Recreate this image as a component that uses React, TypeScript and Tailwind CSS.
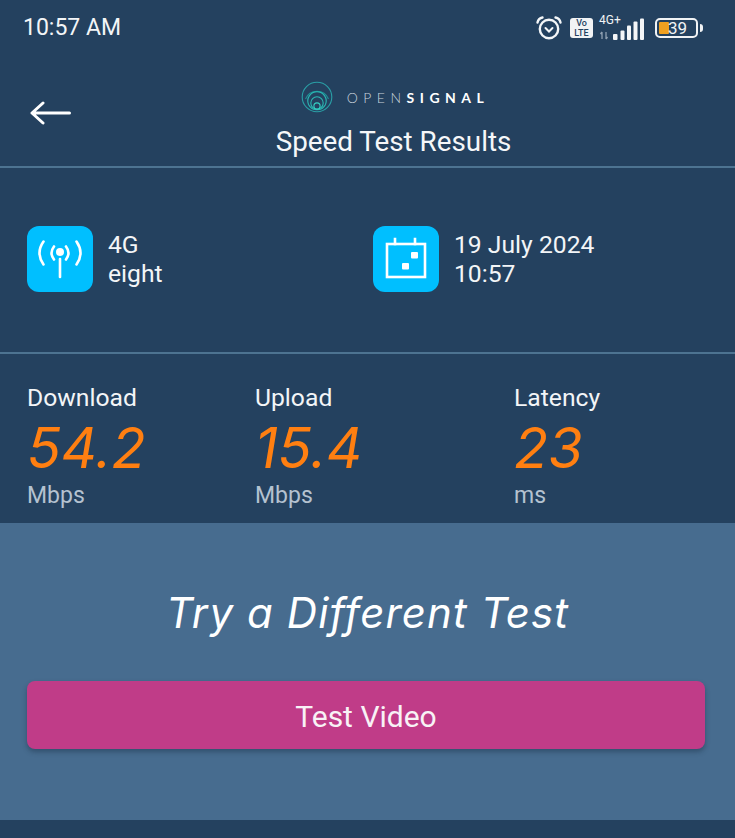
const roboto = { fontFamily: 'Roboto, sans-serif' };

function AlarmIcon() {
  return (
    <svg width="28" height="28" viewBox="0 0 28 28" fill="none" stroke="#f4f6f8" strokeWidth="2.4" strokeLinecap="round">
      <circle cx="14" cy="15" r="9.2" />
      <path d="M10.5 14l3.5 3.5 3.5-3.5" strokeWidth="2" />
      <path d="M2.5 8.5C3 6 5 4 7.5 3.5M25.5 8.5C25 6 23 4 20.5 3.5" />
    </svg>
  );
}

function SignalBars() {
  return (
    <svg width="46" height="23" viewBox="0 0 46 23" fill="#f4f6f8">
      <rect x="14" y="16" width="4.5" height="6" rx="1" />
      <rect x="21.5" y="12.5" width="4" height="9.5" rx="1" />
      <rect x="28" y="7.5" width="4" height="14.5" rx="1" />
      <rect x="34.5" y="3.5" width="4" height="18.5" rx="1" />
      <rect x="41" y="0.5" width="4" height="21.5" rx="1" />
      <path d="M3 14v7M1.5 16l1.5-2M7 14v7M8.5 19l-1.5 2" stroke="#8fa0b2" strokeWidth="1.3" fill="none" />
    </svg>
  );
}

function Battery() {
  return (
    <div className="flex items-center gap-[2px]">
      <div className="relative flex h-[20px] w-[43px] items-center rounded-[5px] border-2 border-[#f1f3f5] p-[2px]">
        <div className="h-full w-[10px] rounded-[1px] bg-[#efa020]" />
        <span className="absolute left-[11px] top-[-2px] text-[17px] leading-[20px] text-[#f1f3f5]" style={roboto}>39</span>
      </div>
      <div className="h-[8px] w-[3px] rounded-r-sm bg-[#f1f3f5]" />
    </div>
  );
}

function StatusBar() {
  return (
    <div className="flex h-[56px] items-center justify-between pl-[23px] pr-[32px] text-white">
      <span className="pt-[1px] text-[23px] font-normal text-[#f3f5f7]" style={roboto}>10:57 AM</span>
      <div className="flex items-center">
        <AlarmIcon />
        <div className="ml-[7px] flex h-[20px] w-[23px] flex-col items-center justify-center rounded-[3px] bg-[#f1f3f5] text-[9px] font-medium leading-[10px] text-[#24415f]" style={roboto}>
          <span>Vo</span>
          <span>LTE</span>
        </div>
        <div className="relative ml-[6px] h-[26px] w-[46px]">
          <span className="absolute left-0 top-[-2px] text-[12px] leading-[14px] text-[#f1f3f5]" style={roboto}>4G+</span>
          <div className="absolute bottom-0 left-0"><SignalBars /></div>
        </div>
        <div className="ml-[10px]"><Battery /></div>
      </div>
    </div>
  );
}

function Logo() {
  return (
    <div className="flex items-center">
      <svg width="32" height="32" viewBox="0 0 32 32" fill="none" stroke="#2bb7b3" strokeWidth="1.1">
        <circle cx="16" cy="16" r="14.8" stroke="#2a9fa6" />
        <path d="M4.5 21a12.5 12.5 0 0 1 23 0" transform="translate(0 -3)" stroke="#1f8f96" />
        <path d="M7.5 23.5a9.2 9.2 0 1 1 17 0 9.5 9.5 0 0 1-17 0z" />
        <circle cx="16" cy="22" r="6.2" />
        <circle cx="16" cy="25" r="3.1" stroke="#35d0c4" />
      </svg>
      <span className="ml-[14px] text-[14px] tracking-[5.5px] text-[#c9d3dc]" style={{ fontFamily: 'Lato, sans-serif' }}>
        <span className="font-light">OPEN</span>
        <span className="font-bold text-white">SIGNAL</span>
      </span>
    </div>
  );
}

function Header() {
  return (
    <div className="flex h-[112px] border-b-2 border-[#4d7391]">
      <div className="flex w-[30px] shrink-0" />
      <svg className="mt-[44px] shrink-0" width="41" height="26" viewBox="0 0 41 26" fill="none" stroke="#fff" strokeWidth="3" strokeLinecap="round" strokeLinejoin="round">
        <path d="M39.5 13H2M13 3L2 13l11 10" />
      </svg>
      <div className="ml-[30px] flex w-[585px] flex-col items-center pt-[25px]">
        <div className="pl-[3px]"><Logo /></div>
        <h1 className="mt-[11px] text-[27.8px] leading-[36px] text-[#f5f7f9]" style={roboto}>Speed Test Results</h1>
      </div>
    </div>
  );
}

function IconTile({ children }: { children: React.ReactNode }) {
  return (
    <div className="flex h-[66px] w-[66px] shrink-0 items-center justify-center rounded-[12px] bg-[#00bfff]">
      {children}
    </div>
  );
}

function Info() {
  return (
    <div className="flex h-[186px] items-center border-b-2 border-[#4d7391] pb-[3px] pl-[27px] text-[24.7px] leading-[29px] text-[#f3f5f7]" style={roboto}>
      <div className="flex w-[346px] items-center gap-[15px]">
        <IconTile>
          <svg width="44" height="44" viewBox="0 0 44 44" fill="none" stroke="#fff" strokeWidth="2.6" strokeLinecap="round">
            <circle cx="22" cy="15" r="4" fill="#fff" stroke="none" />
            <path d="M22 22v18" />
            <path d="M16 9.5Q11 16 16 22.5M28 9.5Q33 16 28 22.5" />
            <path d="M5.5 4.5Q-2.5 16 5.5 27.5M38.5 4.5Q46.5 16 38.5 27.5" />
          </svg>
        </IconTile>
        <div>
          <div>4G</div>
          <div>eight</div>
        </div>
      </div>
      <div className="flex items-center gap-[15px]">
        <IconTile>
          <svg width="44" height="44" viewBox="0 0 44 44" fill="none" stroke="#fff" strokeWidth="2.6" strokeLinecap="square">
            <rect x="3" y="7" width="38" height="33" />
            <path d="M11 2v5M31 2v5" />
            <rect x="27" y="15" width="7" height="6.5" rx="1" fill="#fff" stroke="none" />
            <rect x="18" y="26" width="7" height="6.5" rx="1" fill="#fff" stroke="none" />
          </svg>
        </IconTile>
        <div>
          <div>19 July 2024</div>
          <div>10:57</div>
        </div>
      </div>
    </div>
  );
}

const STATS = [
  { label: 'Download', value: '54.2', unit: 'Mbps', width: 'w-[228px]' },
  { label: 'Upload', value: '15.4', unit: 'Mbps', width: 'w-[259px]' },
  { label: 'Latency', value: '23', unit: 'ms', width: 'w-[200px]' },
];

function Stats() {
  return (
    <div className="flex h-[169px] pl-[27px] pt-[28px]">
      {STATS.map((s) => (
        <div key={s.label} className={s.width}>
          <div className="text-[24.7px] leading-[32px] text-[#f3f5f7]" style={roboto}>{s.label}</div>
          <div className="mt-[5px] text-[56px] italic leading-[58px] text-[#ff7f11]" style={{ fontFamily: 'Inter, sans-serif', fontWeight: 400 }}>{s.value}</div>
          <div className="mt-[5px] text-[23px] leading-[28px] text-[#b4c2d0]" style={roboto}>{s.unit}</div>
        </div>
      ))}
    </div>
  );
}

function TryPanel() {
  return (
    <div className="h-[297px] bg-[#476c8f] px-[27px] pt-[64px]">
      <h2 className="text-center text-[42px] italic leading-[52px] tracking-[1.1px] text-white" style={{ fontFamily: 'Inter, sans-serif' }}>Try a Different Test</h2>
      <button className="mt-[42px] h-[68px] w-[678px] rounded-[8px] bg-[#c03c88] pt-[2px] text-[30px] text-[#f8f2f6] shadow-[0_3px_5px_rgba(20,40,60,0.4)]" style={roboto}>
        Test Video
      </button>
    </div>
  );
}

export default function App() {
  return (
    <div className="h-[838px] w-[735px] overflow-hidden bg-[#24415f]">
      <StatusBar />
      <Header />
      <Info />
      <Stats />
      <TryPanel />
    </div>
  );
}
